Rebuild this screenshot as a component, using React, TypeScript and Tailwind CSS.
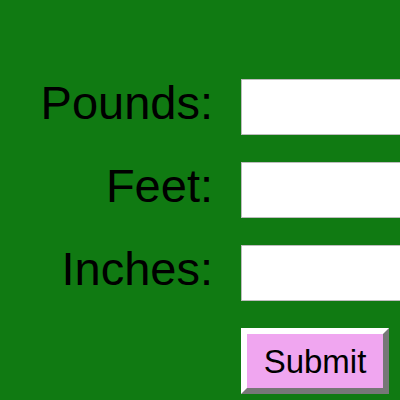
export default function App() {
  const fields = ["Pounds:", "Feet:", "Inches:"];

  return (
    <div className="w-[400px] h-[400px] overflow-hidden bg-[#107a12] font-['Liberation_Sans',Arial,sans-serif] text-black">
      <form
        onSubmit={(e) => e.preventDefault()}
        className="grid grid-cols-[213px_220px] gap-x-[28px] gap-y-[27px] pt-[79px]"
      >
        {fields.map((label) => (
          <div key={label} className="contents">
            <label className="text-right text-[47px] leading-[47px]">
              {label}
            </label>
            <input
              type="text"
              className="h-[56px] w-[220px] bg-white border border-[#bdbdbd] outline-none"
            />
          </div>
        ))}
        <div />
        <button
          type="submit"
          className="h-[66px] w-[148px] bg-[#f0a6f0] border-[6px] border-solid border-t-white border-l-white border-r-[#777777] border-b-[#777777] text-[33px] leading-none text-black"
        >
          Submit
        </button>
      </form>
    </div>
  );
}
